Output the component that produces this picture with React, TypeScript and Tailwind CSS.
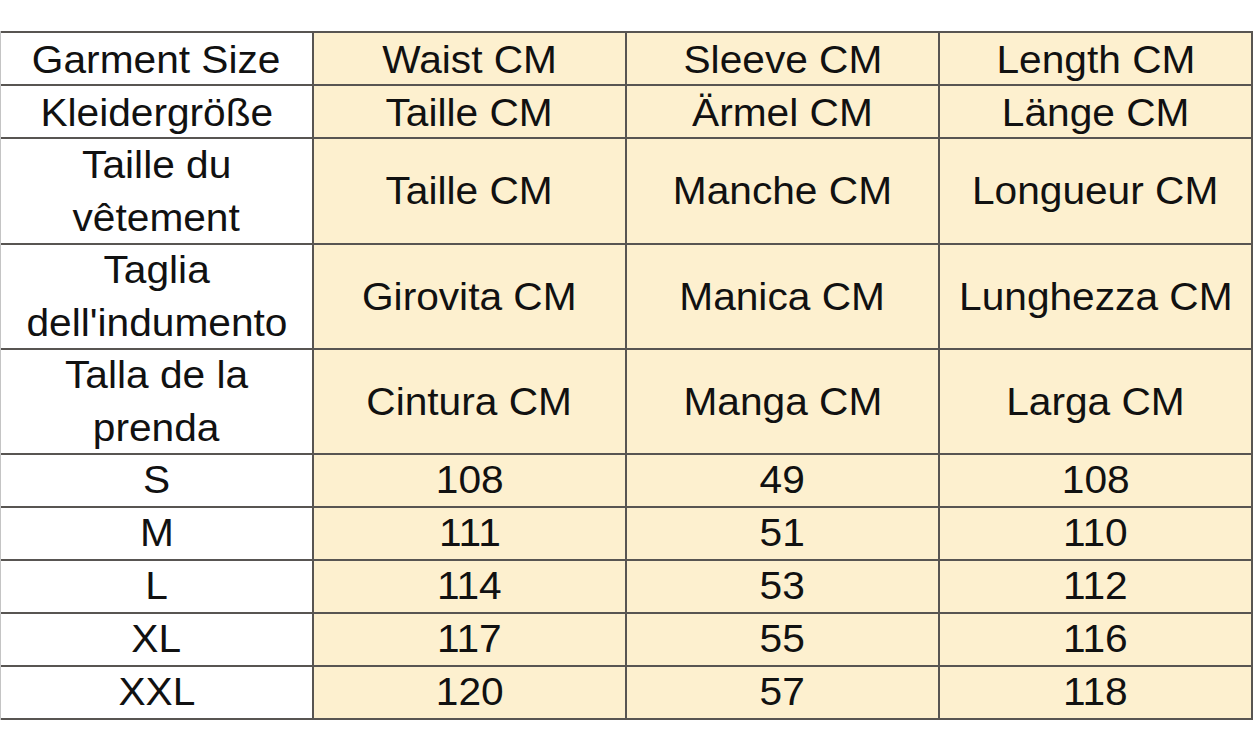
import React from "react";

const rows: { h: string; cells: string[][] }[] = [
  { h: "h-[51px] pt-[3px]", cells: [["Garment Size"], ["Waist CM"], ["Sleeve CM"], ["Length CM"]] },
  { h: "h-[51px] pt-[3px]", cells: [["Kleidergröße"], ["Taille CM"], ["Ärmel CM"], ["Länge CM"]] },
  { h: "h-[104px] pt-[1px]", cells: [["Taille du", "vêtement"], ["Taille CM"], ["Manche CM"], ["Longueur CM"]] },
  { h: "h-[103px] pt-[1px]", cells: [["Taglia", "dell'indumento"], ["Girovita CM"], ["Manica CM"], ["Lunghezza CM"]] },
  { h: "h-[103px] pt-[1px]", cells: [["Talla de la", "prenda"], ["Cintura CM"], ["Manga CM"], ["Larga CM"]] },
  { h: "h-[51px]", cells: [["S"], ["108"], ["49"], ["108"]] },
  { h: "h-[51px]", cells: [["M"], ["111"], ["51"], ["110"]] },
  { h: "h-[51px]", cells: [["L"], ["114"], ["53"], ["112"]] },
  { h: "h-[51px]", cells: [["XL"], ["117"], ["55"], ["116"]] },
  { h: "h-[51px]", cells: [["XXL"], ["120"], ["57"], ["118"]] },
];

export default function App() {
  return (
    <div
      className="w-[1253px] h-[752px] bg-white pt-[31px]"
      style={{ fontFamily: '"Liberation Sans", Arial, sans-serif' }}
    >
      <div className="grid grid-cols-[311px_311px_311px_311px] gap-[2px] bg-[#585552] pt-[2px] pr-[2px] pb-[2px] border-l border-[#c4c4c4]">
        {rows.map((r, ri) =>
          r.cells.map((lines, ci) => (
            <div
              key={`${ri}-${ci}`}
              className={`${r.h} flex flex-col items-center justify-center text-[38px] leading-[53px] text-[#111111] ${
                ci === 0 ? "bg-white" : "bg-[#fdf0cf]"
              }`}
            >
              {lines.map((l, li) => (
                <span key={li} className="inline-block scale-x-[1.07] whitespace-nowrap">
                  {l}
                </span>
              ))}
            </div>
          ))
        )}
      </div>
    </div>
  );
}
